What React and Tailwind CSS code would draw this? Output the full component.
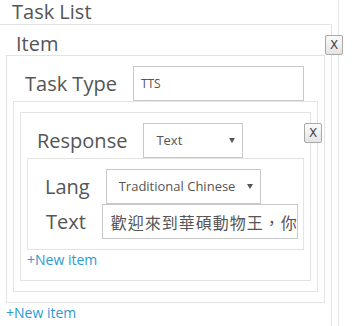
import React from 'react';

const line = 'border-[#e3e3e3]';

const XButton = () => (
  <button
    type="button"
    className="absolute top-[10px] right-[-12px] w-[18px] h-[20px] flex items-center justify-center rounded-[2px] border border-[#a9a9a9] bg-gradient-to-b from-[#fbfbfb] to-[#e4e4e4] text-[12px] leading-none text-[#444] font-['DejaVu_Sans',sans-serif]"
  >
    X
  </button>
);

const Arrow = () => (
  <svg width="6" height="5" viewBox="0 0 6 5" className="shrink-0">
    <path d="M0 0 L6 0 L3 5 Z" fill="#555" />
  </svg>
);

const FakeSelect = ({ value, width }) => (
  <div className={`${width} h-[35px] ml-[16px] flex items-center justify-between pl-[12px] pr-[7px] border border-[#c9c9c9] bg-white text-[13px] text-[#555]`}>
    <span>{value}</span>
    <Arrow />
  </div>
);

export default function App() {
  return (
    <div className="w-[339px] h-[326px] border-r border-[#e3e3e3] bg-white font-['Open_Sans',sans-serif] text-[#555]">
      <div className="h-[24px] pl-[12px] text-[20px] leading-[24px]">Task List</div>

      {/* task list */}
      <div className={`relative h-[302px] mr-[6px] border-t border-r ${line} pt-[7px]`}>
        <div className="h-[23px] pl-[16px] text-[20px] leading-[24px]">Item</div>
        <XButton />

        {/* item */}
        <div className={`mx-[6px] border ${line} py-[10px]`}>
          <div className="flex items-center h-[35px] pl-[18px]">
            <span className="text-[20px]">Task Type</span>
            <div className="w-[171px] h-[35px] ml-[16px] flex items-center pl-[7px] border border-[#c9c9c9] text-[12px] text-[#555]">
              TTS
            </div>
          </div>

          {/* response list */}
          <div className={`mx-[6px] border ${line} py-[10px]`}>
            <div className={`relative mx-[6px] border ${line} py-[10px]`}>
              <XButton />
              <div className="flex items-center h-[35px] pl-[16px]">
                <span className="text-[20px]">Response</span>
                <FakeSelect value="Text" width="w-[100px]" />
              </div>

              <div className={`mx-[6px] border ${line} py-[10px]`}>
                <div className="flex items-center h-[35px] pl-[17px]">
                  <span className="text-[20px]">Lang</span>
                  <FakeSelect value="Traditional Chinese" width="w-[155px]" />
                </div>
                <div className="flex items-center h-[35px] pl-[18px]">
                  <span className="text-[20px]">Text</span>
                  <div className="w-[196px] h-[35px] ml-[16px] flex items-center pl-[8px] border border-[#c9c9c9] overflow-hidden whitespace-nowrap text-[16px] tracking-[1px] text-[#555] font-['Noto_Sans_CJK_TC',sans-serif]">
                    歡迎來到華碩動物王，你好
                  </div>
                </div>
              </div>

              <div className="ml-[6px] text-[14px] leading-[20px] text-[#2a9bd4]">+New item</div>
            </div>
          </div>
        </div>

        <div className="ml-[6px] text-[14px] leading-[20px] text-[#2a9bd4]">+New item</div>
      </div>
    </div>
  );
}
